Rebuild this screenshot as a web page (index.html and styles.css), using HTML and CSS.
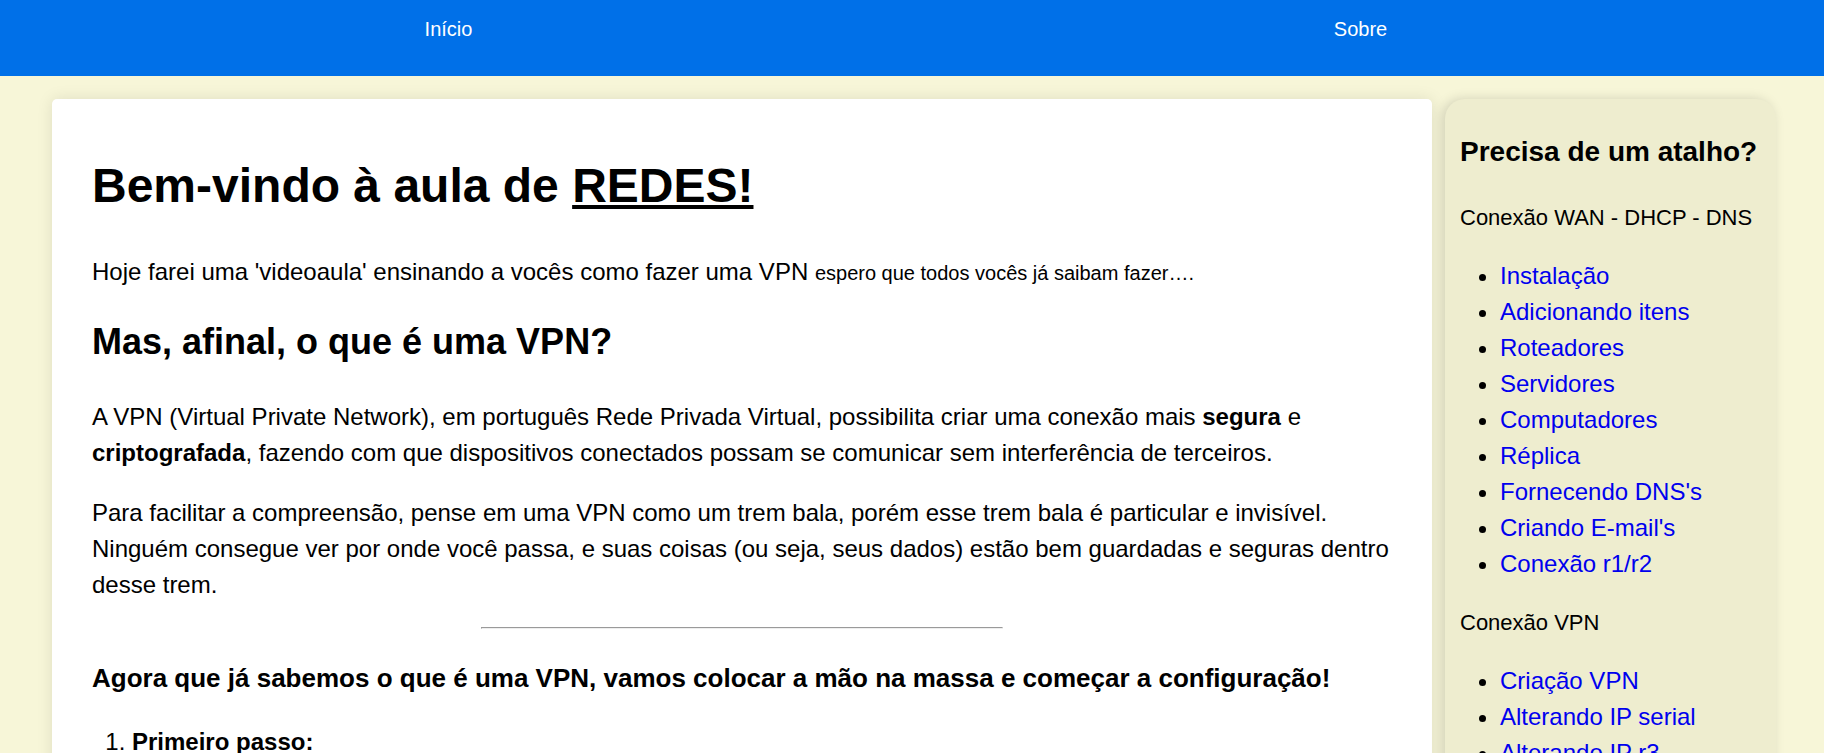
FILE: index.html
```html
<!DOCTYPE html>
<html lang="pt-BR">
<head>
  <meta charset="utf-8">
  <meta name="viewport" content="width=device-width, initial-scale=1">
  <title>Aula de Redes</title>
  <link rel="stylesheet" href="styles.css">
</head>
<body>
  <header class="topbar">
    <nav class="menu">
      <a class="menu-link" href="#inicio">Início</a>
      <a class="menu-link" href="#sobre">Sobre</a>
    </nav>
  </header>

  <div class="layout">
    <main class="content" id="inicio">
      <h1 class="title">Bem-vindo à aula de <u>REDES!</u></h1>
      <p>Hoje farei uma 'videoaula' ensinando a vocês como fazer uma VPN <small class="aside-note">espero que todos vocês já saibam fazer….</small></p>
      <h2 class="subtitle">Mas, afinal, o que é uma VPN?</h2>
      <p>A VPN (Virtual Private Network), em português Rede Privada Virtual, possibilita criar uma conexão mais <strong>segura</strong> e <strong>criptografada</strong>, fazendo com que dispositivos conectados possam se comunicar sem interferência de terceiros.</p>
      <p>Para facilitar a compreensão, pense em uma VPN como um trem bala, porém esse trem bala é particular e invisível. Ninguém consegue ver por onde você passa, e suas coisas (ou seja, seus dados) estão bem guardadas e seguras dentro desse trem.</p>
      <hr class="divider">
      <h3 class="section-title">Agora que já sabemos o que é uma VPN, vamos colocar a mão na massa e começar a configuração!</h3>
      <ol class="steps">
        <li><strong>Primeiro passo:</strong></li>
      </ol>
    </main>

    <aside class="sidebar">
      <h3 class="sidebar-title">Precisa de um atalho?</h3>
      <p class="sidebar-label">Conexão WAN - DHCP - DNS</p>
      <ul class="shortcuts">
        <li><a href="#instalacao">Instalação</a></li>
        <li><a href="#itens">Adicionando itens</a></li>
        <li><a href="#roteadores">Roteadores</a></li>
        <li><a href="#servidores">Servidores</a></li>
        <li><a href="#computadores">Computadores</a></li>
        <li><a href="#replica">Réplica</a></li>
        <li><a href="#dns">Fornecendo DNS's</a></li>
        <li><a href="#emails">Criando E-mail's</a></li>
        <li><a href="#r1r2">Conexão r1/r2</a></li>
      </ul>
      <p class="sidebar-label">Conexão VPN</p>
      <ul class="shortcuts">
        <li><a href="#vpn">Criação VPN</a></li>
        <li><a href="#serial">Alterando IP serial</a></li>
        <li><a href="#r3">Alterando IP r3</a></li>
      </ul>
    </aside>
  </div>
</body>
</html>
```
FILE: styles.css
```css
body {
  margin: 0;
  background: #f7f6d8;
  color: #000;
  font-family: Arial, "Liberation Sans", sans-serif;
  font-size: 24px;
  line-height: 1.5;
}

p,
ol,
ul {
  margin: 24px 0;
}

ol,
ul {
  padding-left: 40px;
}

.topbar {
  padding: 14px 0 32px;
  background: #0070e8;
}

.menu {
  display: grid;
  grid-template-columns: 1fr 1fr;
  font-size: 20px;
  text-align: center;
}

.menu-link {
  padding-right: 15px;
  color: #fff;
  text-decoration: none;
}

.layout {
  display: flex;
  gap: 13px;
  padding: 23px 48px 0 52px;
}

.content {
  flex: 1;
  min-width: 0;
  padding: 20px 40px;
  background: #fff;
  border-radius: 5px;
  box-shadow: 0 0 16px rgba(0, 0, 0, 0.1);
}

.title {
  margin: 31px 0 32px;
  font-size: 48px;
}

.subtitle {
  margin: 25px 0 30px;
  font-size: 36px;
}

.aside-note {
  font-size: 20px;
}

.divider {
  width: 40%;
  margin: 24px auto;
}

.section-title {
  margin: 30px 0 26px;
  font-size: 26px;
}

.sidebar {
  box-sizing: border-box;
  width: 331px;
  padding: 4px 15px;
  background: #eeedcf;
  border-radius: 20px;
  box-shadow: -3px 0 12px rgba(0, 0, 0, 0.15);
}

.sidebar-title {
  margin: 28px 0;
  font-size: 28px;
}

.sidebar-label {
  font-size: 22px;
}

.shortcuts a {
  color: #00e;
  text-decoration: none;
}
```
